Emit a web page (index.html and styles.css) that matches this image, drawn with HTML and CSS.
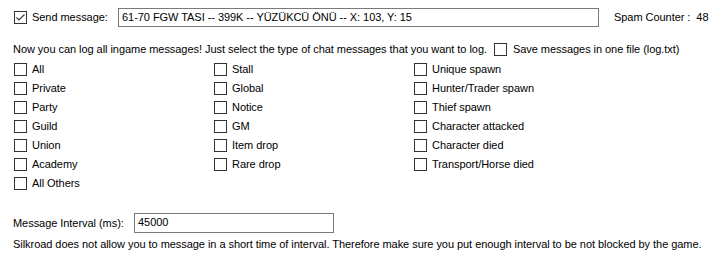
FILE: index.html
```html
<!DOCTYPE html>
<html>
<head>
    <meta content="text/html; charset=UTF-8" http-equiv="content-type">
    <title>Chat Logger</title>
    <link rel="stylesheet" href="styles.css">
</head>
<body>
    <div class="send-row">
        <span class="box checked">
            <svg width="11" height="11" viewBox="0 0 11 11"><path d="M1.5 5.5 L4 8 L9.5 2.5" fill="none" stroke="#333" stroke-width="1.1"/></svg>
        </span>
        <span class="send-label">Send message:</span>
        <div class="field send-field">61-70 FGW TASI -- 399K -- YÜZÜKCÜ ÖNÜ -- X: 103, Y: 15</div>
        <span class="counter">Spam Counter :&nbsp; 48</span>
    </div>

    <div class="intro-row">
        <span>Now you can log all ingame messages! Just select the type of chat messages that you want to log.</span>
        <span class="box save-box"></span>
        <span class="save-label">Save messages in one file (log.txt)</span>
    </div>

    <div class="options">
        <div class="col">
            <div class="opt"><span class="box"></span>All</div>
            <div class="opt"><span class="box"></span>Private</div>
            <div class="opt"><span class="box"></span>Party</div>
            <div class="opt"><span class="box"></span>Guild</div>
            <div class="opt"><span class="box"></span>Union</div>
            <div class="opt"><span class="box"></span>Academy</div>
            <div class="opt"><span class="box"></span>All Others</div>
        </div>
        <div class="col">
            <div class="opt"><span class="box"></span>Stall</div>
            <div class="opt"><span class="box"></span>Global</div>
            <div class="opt"><span class="box"></span>Notice</div>
            <div class="opt"><span class="box"></span>GM</div>
            <div class="opt"><span class="box"></span>Item drop</div>
            <div class="opt"><span class="box"></span>Rare drop</div>
        </div>
        <div class="col">
            <div class="opt"><span class="box"></span>Unique spawn</div>
            <div class="opt"><span class="box"></span>Hunter/Trader spawn</div>
            <div class="opt"><span class="box"></span>Thief spawn</div>
            <div class="opt"><span class="box"></span>Character attacked</div>
            <div class="opt"><span class="box"></span>Character died</div>
            <div class="opt"><span class="box"></span>Transport/Horse died</div>
        </div>
    </div>

    <div class="interval-row">
        <span class="interval-label">Message Interval (ms):</span>
        <div class="field interval-field">45000</div>
    </div>
    <p class="note">Silkroad does not allow you to message in a short time of interval. Therefore make sure you put enough interval to be not blocked by the game.</p>
</body>
</html>
```

FILE: styles.css
```css
body {
    margin: 0;
    background-color: #ffffff;
    color: #000000;
    font-family: "Liberation Sans", Arial, sans-serif;
    font-size: 11px;
    line-height: 13px;
    letter-spacing: -0.05px;
    white-space: nowrap;
    width: 715px;
    height: 263px;
    overflow: hidden;
}

.box {
    display: inline-flex;
    align-items: center;
    justify-content: center;
    box-sizing: border-box;
    width: 13px;
    height: 13px;
    border: 1px solid #333333;
    background: #ffffff;
    flex: none;
}

/* top row */
.send-row {
    display: flex;
    align-items: center;
    height: 19px;
    margin-top: 8px;
    padding-left: 14px;
}

.send-label {
    margin-left: 5px;
    width: 86px;
}

.field {
    box-sizing: border-box;
    height: 19px;
    border: 1px solid #7a7a7a;
    padding: 2px 0 0 3px;
}

.send-field {
    width: 481px;
}

.counter {
    margin-left: 15px;
}

/* intro row */
.intro-row {
    display: flex;
    align-items: center;
    height: 13px;
    margin-top: 16px;
    padding-left: 13px;
}

.save-box {
    margin-left: 7px;
}

.save-label {
    margin-left: 6px;
}

/* checkbox grid */
.options {
    display: flex;
    padding-left: 14px;
    margin-top: 4px;
}

.col {
    width: 200px;
}

.opt {
    display: flex;
    align-items: center;
    height: 19px;
}

.opt .box {
    margin-right: 5px;
}

/* interval */
.interval-row {
    display: flex;
    align-items: center;
    height: 20px;
    margin-top: 20px;
    padding-left: 13px;
}

.interval-label {
    width: 121px;
}

.interval-field {
    width: 200px;
    height: 20px;
}

.note {
    margin: 5px 0 0 13px;
}
```
